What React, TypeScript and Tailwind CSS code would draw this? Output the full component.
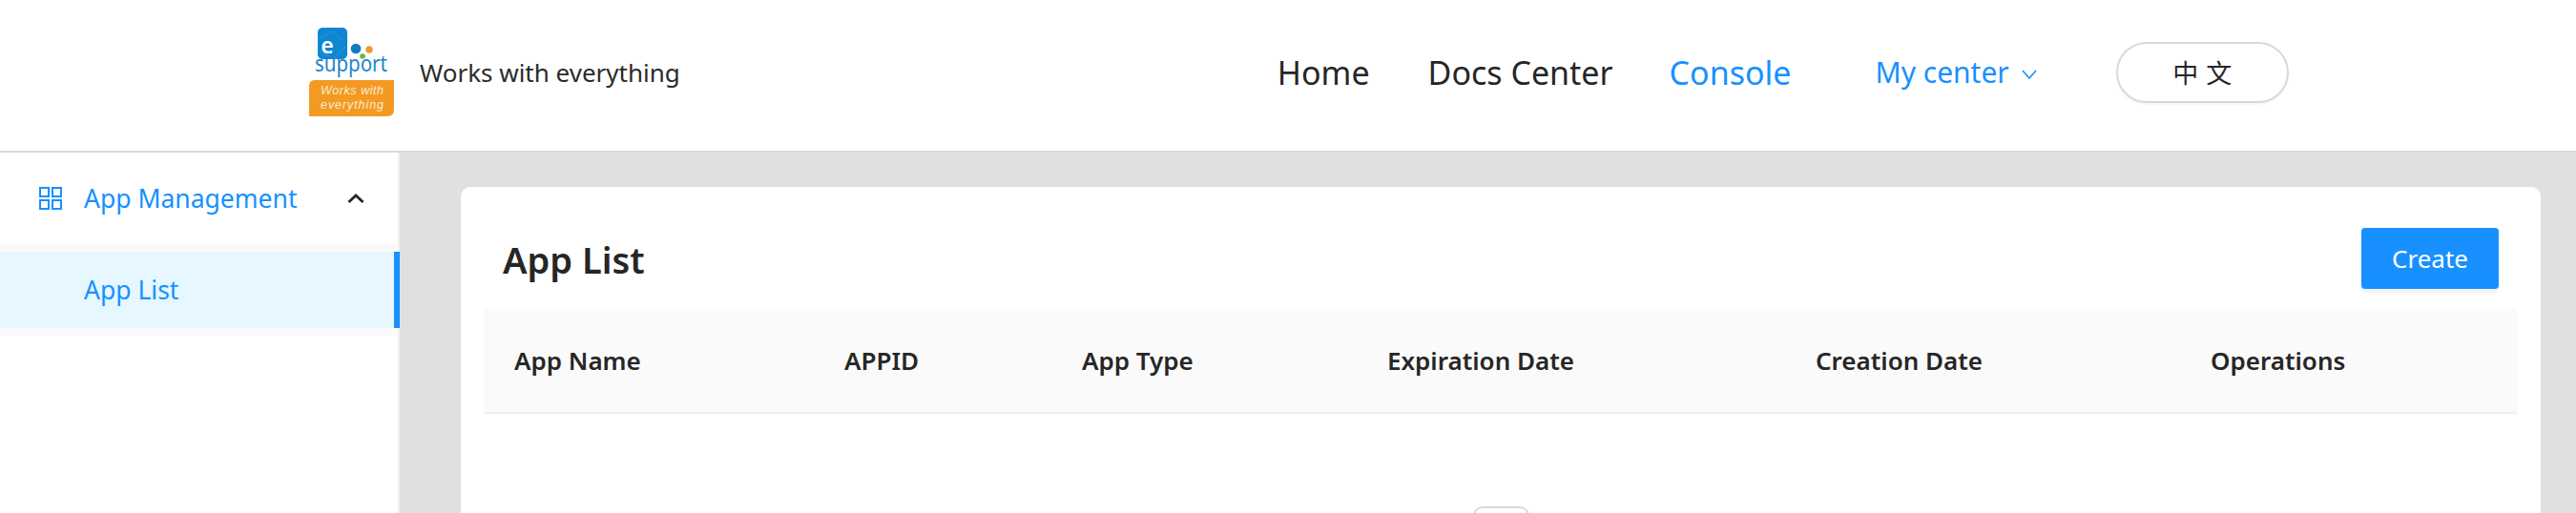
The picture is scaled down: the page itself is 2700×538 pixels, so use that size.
import React from "react";

function Logo() {
  return (
    <svg width="90" height="94" viewBox="0 0 90 94" className="mb-[6px] shrink-0">
      <rect x="9" y="0" width="31" height="33" rx="5" fill="#0f86d2" />
      <path d="M9 12 L24 4 L36 14 M26 33 L38 20 M12 26 L22 30" stroke="#2c97dc" strokeWidth="1" fill="none" />
      <text x="19" y="27" textAnchor="middle" fontFamily="'Noto Sans', sans-serif" fontWeight="600" fontSize="23" fill="#ffffff">e</text>
      <circle cx="49" cy="22" r="5.3" fill="#0f7cc4" />
      <circle cx="63" cy="23" r="3.7" fill="#f29a24" />
      <circle cx="56" cy="30" r="2.8" fill="#6cb33f" />
      <text x="6" y="46" fontFamily="'Noto Sans', sans-serif" fontWeight="400" fontSize="23" fill="#1a86c9" textLength="76" lengthAdjust="spacingAndGlyphs">support</text>
      <path d="M6 55 Q0 55 0 61 V93 H82 Q89 93 89 86 V55 Z" fill="#f29a24" />
      <text x="45" y="70" textAnchor="middle" fontFamily="'Liberation Sans', sans-serif" fontStyle="italic" fontSize="12.5" fill="#fdeccb" textLength="66" lengthAdjust="spacing">Works with</text>
      <text x="45" y="85" textAnchor="middle" fontFamily="'Liberation Sans', sans-serif" fontStyle="italic" fontSize="12.5" fill="#fdeccb" textLength="66" lengthAdjust="spacing">everything</text>
    </svg>
  );
}

function GridIcon() {
  return (
    <svg width="24" height="24" viewBox="0 0 24 24" fill="none" stroke="#1890ff" strokeWidth="2" className="shrink-0">
      <rect x="1" y="1" width="9" height="9" />
      <rect x="14" y="1" width="9" height="9" />
      <rect x="1" y="14" width="9" height="9" />
      <rect x="14" y="14" width="9" height="9" />
    </svg>
  );
}

const columns = ["App Name", "APPID", "App Type", "Expiration Date", "Creation Date", "Operations"];

export default function App() {
  return (
    <div className="flex h-[538px] w-[2700px] flex-col overflow-hidden bg-[#e0e0e0] font-['Noto_Sans',sans-serif] text-[#262626]">
      <header className="flex h-[160px] shrink-0 items-center border-b-2 border-[#d9d9d9] bg-white pl-[324px]">
        <Logo />
        <span className="mb-[6px] ml-[26px] text-[26px] leading-none text-[#2b2b2b]">Works with everything</span>
        <nav className="mb-[6px] ml-[626px] flex items-center">
          <span className="text-[34px] leading-none">Home</span>
          <span className="ml-[61px] text-[34px] leading-none">Docs Center</span>
          <span className="ml-[59px] text-[34px] leading-none text-[#1890ff]">Console</span>
          <span className="ml-[88px] flex items-center text-[30px] leading-none text-[#1890ff]">
            My center
            <svg width="18" height="12" viewBox="0 0 18 12" fill="none" stroke="#1890ff" strokeWidth="1.6" className="ml-[12px] mt-[4px]">
              <path d="M2 2 L9 10 L16 2" />
            </svg>
          </span>
          <span className="ml-[82px] flex h-[64px] w-[181px] items-center justify-center rounded-[32px] border-2 border-[#d9d9d9] bg-white pl-[8px] font-['Noto_Sans_CJK_SC',sans-serif] text-[27px] tracking-[8px] shadow-[0_2px_0_rgba(0,0,0,0.03)]">
            中文
          </span>
        </nav>
      </header>
      <div className="flex min-h-0 flex-1">
        <aside className="w-[419px] shrink-0 border-r-2 border-[#f0f0f0] bg-white">
          <div className="flex h-[96px] items-center pl-[41px] text-[26.5px] text-[#1890ff]">
            <GridIcon />
            <span className="ml-[23px] mt-[2px]">App Management</span>
            <svg width="18" height="12" viewBox="0 0 18 12" fill="none" stroke="#262626" strokeWidth="2.8" className="ml-[53px]">
              <path d="M1.5 10 L9 3 L16.5 10" />
            </svg>
          </div>
          <div className="bg-[#fafafa] py-[8px]">
            <div className="mr-[-2px] flex h-[80px] items-center border-r-[6px] border-[#1890ff] bg-[#e6f7ff] pl-[88px] pt-[2px] text-[26.5px] text-[#1890ff]">App List</div>
          </div>
        </aside>
        <main className="min-w-0 flex-1 pl-[64px] pr-[37px] pt-[36px]">
          <div className="flex h-full flex-col rounded-t-[10px] bg-white px-[24px]">
            <div className="flex h-[128px] shrink-0 items-center justify-between px-[20px] pt-[22px]">
              <h1 className="mt-[2px] text-[38px] font-semibold leading-none">App List</h1>
              <button className="flex h-[64px] w-[144px] items-center justify-center rounded-[4px] bg-[#1890ff] text-[26px] text-white shadow-[0_4px_0_rgba(0,0,0,0.045)]">Create</button>
            </div>
            <div className="grid h-[110px] shrink-0 grid-cols-[346px_249px_320px_449px_414px_1fr] items-center rounded-t-[4px] border-b-2 border-[#f0f0f0] bg-[#fafafa] pl-[32px] text-[26px] font-semibold">
              {columns.map((c) => (
                <span key={c}>{c}</span>
              ))}
            </div>
            <div className="flex justify-center pt-[97px]">
              <div className="h-[40px] w-[59px] rounded-t-[10px] border-2 border-[#d9d9d9] bg-white" />
            </div>
          </div>
        </main>
      </div>
    </div>
  );
}
